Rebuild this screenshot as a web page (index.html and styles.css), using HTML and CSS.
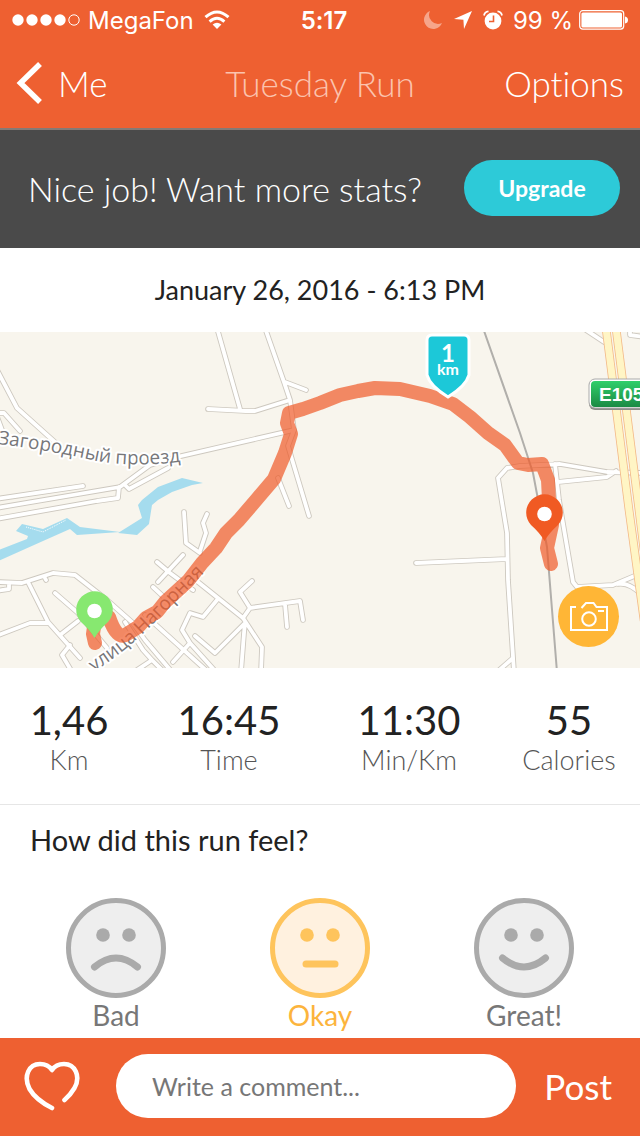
FILE: index.html
```html
<!DOCTYPE html>
<html lang="en">
<head>
    <meta charset="UTF-8">
    <meta name="viewport" content="width=device-width, initial-scale=1.0">
    <title>Tuesday Run</title>
    <link rel="stylesheet" href="styles.css">
</head>
<body>

    <header class="header">
        <div class="status-bar">
            <div class="status-left">
                <svg width="68" height="14" viewBox="0 0 68 14" fill="#fff">
                    <circle cx="6" cy="7" r="5.7"/>
                    <circle cx="20" cy="7" r="5.7"/>
                    <circle cx="34" cy="7" r="5.7"/>
                    <circle cx="48" cy="7" r="5.7"/>
                    <circle cx="62" cy="7" r="5.2" fill="none" stroke="#fff"/>
                </svg>
                <span>MegaFon</span>
                <svg width="26" height="20" viewBox="0 0 26 20" fill="none" stroke="#fff" stroke-width="3">
                    <path d="M1.5 7.2 Q13 -3.2 24.5 7.2"/>
                    <path d="M5.6 11.6 Q13 5 20.4 11.6"/>
                    <path d="M13 19 L8.6 14.6 Q13 10.8 17.4 14.6 Z" fill="#fff" stroke="none"/>
                </svg>
            </div>
            <div class="status-time">5:17</div>
            <div class="status-right">
                <svg width="20" height="20" viewBox="0 0 20 20">
                    <path d="M7 1 A9.3 9.3 0 1 0 19 13 A9 9 0 0 1 7 1 Z" fill="#f6a58a"/>
                </svg>
                <svg class="icon-location" width="20" height="20" viewBox="0 0 20 20">
                    <path d="M19 1 L11 19 L10.4 9.8 L1 9 Z" fill="#fff"/>
                </svg>
                <svg width="20" height="20" viewBox="0 0 20 20">
                    <circle cx="10" cy="11" r="8.4" fill="#fff"/>
                    <path d="M1 5.5 A5 5 0 0 1 5.5 1.3 M19 5.5 A5 5 0 0 0 14.5 1.3" fill="none" stroke="#fff" stroke-width="1.8"/>
                    <path d="M10.5 5.5 V11.5 H6" fill="none" stroke="#ee6031" stroke-width="1.6"/>
                </svg>
                <span class="battery-text">99 %</span>
                <svg width="49" height="20" viewBox="0 0 49 20" fill="#fff">
                    <rect x="0.7" y="0.7" width="44" height="18.4" rx="3" fill="none" stroke="#fff" stroke-width="1.2"/>
                    <rect x="2.4" y="2.4" width="40.6" height="15" rx="1.5"/>
                    <path d="M46 6.5 Q49 7 49 10 T46 13.5 Z"/>
                </svg>
            </div>
        </div>
        <nav class="nav-bar">
            <a href="#" class="nav-back">
                <svg width="28" height="42" viewBox="0 0 28 42" fill="none" stroke="#fff" stroke-width="5.5">
                    <path d="M24 2 L4.5 21 L24 40"/>
                </svg>
                Me
            </a>
            <h1 class="nav-title">Tuesday Run</h1>
            <a href="#" class="nav-options">Options</a>
        </nav>
    </header>

    <section class="upgrade">
        <p class="upgrade-text">Nice job! Want more stats?</p>
        <button type="button" class="upgrade-button">Upgrade</button>
    </section>

    <p class="run-date">January 26, 2016 - 6:13 PM</p>

    <section class="map">
        <svg class="map-canvas" viewBox="0 332 640 336" preserveAspectRatio="xMidYMid slice">
            <defs>
                <g id="roads">
                    <path d="M-4 368 L17 408 L47 435 L56 443 M-4 413 H4 L20 431 M-4 414 L2 430"/>
                    <path d="M217 328 L240 409 M265 328 L284 382 L290 400 L294 430 L288 446 L309 516 M285 382 L306 390 M208 409 L246 411 H255 L290 400"/>
                    <path d="M294 430 L177 457 L150 465 L120 487 L-4 508 M-4 499 L83 486 M125 485 L129 489 L168 468 M119 487 L118 498 L97 501 L-4 519 M278 478 L289 506"/>
                    <path d="M-4 582 L22 583 L53 573 L75 575 L107 600 L133 623 L145 640 L172 672 M-4 591 L9 589 V583 M44 576 L46 580"/>
                    <path d="M28 582 L48 622 L80 658 M-4 636 L30 623 H48 M55 593 L78 613 L107 648 M60 635 L78 621 M70 645 L62 655 L72 672"/>
                    <path d="M153 587 L167 600 M145 615 L187 653 L208 672 M157 562 L170 573 L193 590 M158 582 L183 555 M184 512 L186 543 L200 553 M207 514 L203 523 L206 533 L200 551"/>
                    <path d="M193 578 L218 598 L243 618 L262 647 L261 672 M217 600 L203 617 L190 613 L182 630 L190 643 L173 662 M190 643 L216 672 M195 636 L215 653 L245 623 L244 633 L241 672"/>
                    <path d="M243 618 L250 608 L240 592 L252 581 M250 608 L300 601 L303 620 M285 604 L287 627 M125 622 L143 650 L152 660 L134 672 M152 660 L164 672"/>
                    <path d="M416 563 L507 559 M513 658 L497 672 M514 672 L508 580 L507 533 L498 478 L507 468 L520 466 L560 464 L607 472 L644 473 M555 464 L559 500 L573 582 L577 587 L613 585 L644 572 M618 584 Q630 582 644 597 M558 482 L607 477 L616 471"/>
                    <path d="M583 328 L604 342 M630 328 V335 L644 337"/>
                </g>
                <path id="street-north" d="M-2 444 Q40 449 88 459 Q135 470 200 459"/>
                <path id="street-south" d="M94 672 Q130 648 154 623 L220 557"/>
                <linearGradient id="sign-green" x1="0" y1="0" x2="0" y2="1">
                    <stop offset="0" stop-color="#2fcf6b"/>
                    <stop offset="1" stop-color="#1b8a44"/>
                </linearGradient>
            </defs>
            <rect x="-2000" y="332" width="5000" height="336" fill="#f8f5ed"/>

            <!-- water -->
            <g fill="#a5dcee">
                <path d="M203 483 L182 478 L158 487 L142 500 L138 505 L142 518 L118 533 L137 535 L149 524 L152 505 L158 500 L172 492 L192 485 Z"/>
                <path d="M-4 551 L27 539 L28 536 L16 531 L22 524 L43 529 L67 518 L80 527 L120 532 L77 535 L70 529 L43 541 L-4 562 Z"/>
            </g>
            <path d="M26 527 L43 532 L66 520" fill="none" stroke="#fff" stroke-dasharray="1 1"/>

            <!-- roads -->
            <g fill="none" stroke-linecap="round" stroke-linejoin="round">
                <use href="#roads" stroke="#cdc8bf" stroke-width="5.6"/>
                <use href="#roads" stroke="#fff" stroke-width="3.8"/>
                <path d="M483 328 L520 433 L533 473 L547 547 L557 672" stroke="#b1afab" stroke-width="2"/>
                <path d="M606 328 L629 510 L644 620 M616 328 L639 510 L644 550" stroke="#f3b987" stroke-width="8.6"/>
                <path d="M606 328 L629 510 L644 620 M616 328 L639 510 L644 550" stroke="#fff5c5" stroke-width="7"/>
            </g>

            <g class="street-name">
                <text><textPath href="#street-north">Загородный проезд</textPath></text>
                <text><textPath href="#street-south">улица Нагорная</textPath></text>
            </g>

            <!-- track -->
            <path d="M95 643 L93 634 L95 620 L109 617 Q117 641 127 634 L138 627 L146 618 L157 612 L165 602 L188 581 L202 563 L216 548 L226 533 L239 520 L257 499 L274 479 L285 453 L291 434 L287 423 L289 413 L303 409 L320 403 L340 395 L358 391 L375 388 L400 389 L430 396 L453 404 L470 417 L488 433 L505 445 L518 463 L528 465 L542 464 L548 480 L549 500 L552 525 L547 548 L551 564" class="track"/>

            <!-- kilometre marker -->
            <path d="M432 335 H464 Q469 335 469 340 V375 Q466 386 448 397 Q430 386 427 375 V340 Q427 335 432 335 Z" fill="#1cc8d8" stroke="#fff" stroke-width="3"/>
            <text x="448" y="362" class="marker-number">1</text>
            <text x="448" y="375" class="marker-unit">km</text>

            <!-- road sign -->
            <rect x="589" y="380" width="70" height="30" rx="6" fill="#8c8c88"/>
            <rect x="589" y="379" width="70" height="29" rx="6" fill="#fff" stroke="#aaa"/>
            <rect x="591" y="381" width="70" height="26" rx="4" fill="url(#sign-green)"/>
            <text x="599" y="401" class="sign-text">E105</text>

            <!-- start and finish pins -->
            <path d="M94.5 638 Q90 630 81 622 A18.3 18.3 0 1 1 108 622 Q99 630 94.5 638 Z" fill="#87e870"/>
            <circle cx="94.5" cy="611" r="7.3" fill="#fff"/>
            <path d="M544.5 541 Q540 533 531 525 A18.3 18.3 0 1 1 558 525 Q549 533 544.5 541 Z" fill="#f05a23"/>
            <circle cx="544.5" cy="514" r="7.3" fill="#fff"/>
        </svg>
        <button type="button" class="camera-button" aria-label="Add photo">
            <svg width="40" height="30" viewBox="0 0 40 30" fill="none" stroke="#fff" stroke-width="2">
                <path d="M7 5 H2 V28 H38 V5 H27.5 L24.5 1 H17 L12.5 6"/>
                <path d="M29 9 H35"/>
                <circle cx="20" cy="17" r="6.8"/>
            </svg>
        </button>
    </section>

    <section class="stats">
        <div class="stat">
            <div class="stat-value">1,46</div>
            <div class="stat-label">Km</div>
        </div>
        <div class="stat">
            <div class="stat-value">16:45</div>
            <div class="stat-label">Time</div>
        </div>
        <div class="stat">
            <div class="stat-value">11:30</div>
            <div class="stat-label">Min/Km</div>
        </div>
        <div class="stat">
            <div class="stat-value">55</div>
            <div class="stat-label">Calories</div>
        </div>
    </section>

    <fieldset class="feeling">
        <legend class="feeling-title">How did this run feel?</legend>
        <div class="feeling-options">
            <label class="feeling-option" for="bad">
                <input type="radio" id="bad" name="feeling" value="bad">
                <svg class="face" width="100" height="100" viewBox="0 0 100 100">
                    <circle class="face-head" cx="50" cy="50" r="47.5"/>
                    <circle class="face-eye" cx="37" cy="37" r="6.8"/>
                    <circle class="face-eye" cx="63" cy="37" r="6.8"/>
                    <path class="face-mouth" d="M28.5 69 Q50 51 71.5 69"/>
                </svg>
                <span>Bad</span>
            </label>
            <label class="feeling-option" for="okay">
                <input type="radio" id="okay" name="feeling" value="okay" checked>
                <svg class="face" width="100" height="100" viewBox="0 0 100 100">
                    <circle class="face-head" cx="50" cy="50" r="47.5"/>
                    <circle class="face-eye" cx="37" cy="37" r="6.8"/>
                    <circle class="face-eye" cx="63" cy="37" r="6.8"/>
                    <path class="face-mouth" d="M36 66 H65"/>
                </svg>
                <span>Okay</span>
            </label>
            <label class="feeling-option" for="great">
                <input type="radio" id="great" name="feeling" value="great">
                <svg class="face" width="100" height="100" viewBox="0 0 100 100">
                    <circle class="face-head" cx="50" cy="50" r="47.5"/>
                    <circle class="face-eye" cx="37" cy="37" r="6.8"/>
                    <circle class="face-eye" cx="63" cy="37" r="6.8"/>
                    <path class="face-mouth" d="M28.5 60 Q50 78 71.5 60"/>
                </svg>
                <span>Great!</span>
            </label>
        </div>
    </fieldset>

    <form class="comment-bar">
        <button type="button" class="like-button" aria-label="Like">
            <svg width="56" height="50" viewBox="0 0 56 50" fill="none" stroke="#fff" stroke-width="4.6" stroke-linecap="round" stroke-linejoin="round">
                <path d="M28 47 Q12 39 5.5 28 C-1 15 5 3 16 3 Q24 3 28 9 Q32 3 40 3 C51 3 57 15 50.5 27 Q46 34.5 40.5 39"/>
            </svg>
        </button>
        <input type="text" class="comment-input" placeholder="Write a comment..." aria-label="Write a comment">
        <button type="submit" class="post-button">Post</button>
    </form>

</body>
</html>
```
FILE: styles.css
```css
* {
    box-sizing: border-box;
}
body {
    margin: 0;
    min-height: 100vh;
    display: flex;
    flex-direction: column;
    background-color: #fff;
    color: #222;
    font-family: Lato, "Open Sans", sans-serif;
    font-variant-ligatures: none;
}
button, input {
    font-family: inherit;
}
button {
    border: none;
    padding: 0;
    cursor: pointer;
}
svg {
    display: block;
}

/* Header */
.header {
    background-color: #ee6031;
    color: #fff;
    border-bottom: 2px solid #857a75;
}
.status-bar {
    display: grid;
    grid-template-columns: 1fr auto 1fr;
    align-items: center;
    height: 40px;
    padding: 0 12px;
    font-family: Inter, sans-serif;
    font-size: 24px;
}
.status-left, .status-right {
    display: flex;
    align-items: center;
    gap: 10px;
}
.status-left span {
    margin-left: -2px;
}
.status-time {
    font-weight: 600;
    padding-left: 8px;
}
.status-right {
    justify-content: flex-end;
    gap: 6px;
}
.icon-location {
    margin: 0 4px;
}
.battery-text {
    margin-left: 4px;
}
.nav-bar {
    display: grid;
    grid-template-columns: 1fr auto 1fr;
    align-items: center;
    height: 88px;
    padding: 0 16px 2px;
    font-size: 35px;
    font-weight: 300;
}
.nav-bar a {
    color: #fff;
    text-decoration: none;
}
.nav-back {
    display: flex;
    align-items: center;
    gap: 14px;
}
.nav-title {
    margin: 0;
    font-size: 35px;
    font-weight: 300;
    color: #fbc3ae;
}
.nav-options {
    text-align: right;
}

/* Upgrade banner */
.upgrade {
    display: flex;
    align-items: center;
    justify-content: space-between;
    height: 118px;
    padding: 0 20px 2px 28px;
    background-color: #4a4a4a;
    color: #fff;
}
.upgrade-text {
    margin: 0;
    font-size: 34px;
    font-weight: 300;
}
.upgrade-button {
    width: 156px;
    height: 56px;
    border-radius: 28px;
    background-color: #2dcad8;
    color: #fff;
    font-size: 23px;
    font-weight: 700;
}
.run-date {
    margin: 0;
    font-size: 27px;
    line-height: 84px;
    text-align: center;
}

/* Map */
.map {
    position: relative;
    height: 336px;
}
.map-canvas {
    width: 100%;
    height: 100%;
}
.street-name {
    font-family: "Open Sans", sans-serif;
    font-size: 19px;
    fill: #77777a;
    stroke: #fff;
    stroke-width: 4px;
    stroke-linejoin: round;
    paint-order: stroke;
}
.track {
    fill: none;
    stroke: #f05a28;
    stroke-opacity: 0.7;
    stroke-width: 14px;
    stroke-linecap: round;
    stroke-linejoin: round;
}
.marker-number, .marker-unit {
    fill: #fff;
    font-weight: 700;
    text-anchor: middle;
}
.marker-number {
    font-size: 24px;
}
.marker-unit {
    font-size: 16px;
}
.sign-text {
    fill: #fff;
    font-family: "Liberation Sans", sans-serif;
    font-size: 19px;
    font-weight: 700;
}
.camera-button {
    position: absolute;
    right: 21px;
    bottom: 21px;
    display: flex;
    align-items: center;
    justify-content: center;
    width: 61px;
    height: 61px;
    border-radius: 50%;
    background-color: #ffb636;
}

/* Stats */
.stats {
    display: grid;
    grid-template-columns: 138fr 182fr 178fr 142fr;
    padding: 26px 0 30px;
    border-bottom: 1px solid #e6e6e6;
    text-align: center;
}
.stat-value {
    font-size: 40px;
    line-height: 52px;
}
.stat-label {
    font-size: 27px;
    font-weight: 300;
    line-height: 28px;
    color: #555;
}

/* Feeling */
.feeling {
    flex: 1;
    margin: 0;
    padding: 0 14px;
    border: none;
}
.feeling-title {
    padding: 17px 16px 19px;
    font-size: 29px;
    line-height: 36px;
}
.feeling-options {
    display: grid;
    grid-template-columns: repeat(3, 1fr);
    padding-top: 21px;
}
.feeling-option {
    display: flex;
    flex-direction: column;
    align-items: center;
    color: #777;
    font-size: 28px;
    line-height: 34px;
    cursor: pointer;
}
.feeling-option input {
    appearance: none;
    width: 0;
    height: 0;
    margin: 0;
}
.face-head {
    fill: #eee;
    stroke: #aaa;
    stroke-width: 5px;
}
.face-eye {
    fill: #aaa;
}
.face-mouth {
    fill: none;
    stroke: #aaa;
    stroke-width: 7px;
    stroke-linecap: round;
}
input:checked ~ span {
    color: #fcb43c;
}
input:checked + .face .face-head {
    fill: #fff1df;
    stroke: #fec45c;
}
input:checked + .face .face-eye {
    fill: #fec45c;
}
input:checked + .face .face-mouth {
    stroke: #fec45c;
}

/* Comment bar */
.comment-bar {
    display: flex;
    align-items: center;
    height: 98px;
    padding: 0 28px 2px 24px;
    background-color: #ee6031;
}
.like-button, .post-button {
    background: none;
    color: #fff;
}
.comment-input {
    flex: 1;
    min-width: 0;
    height: 64px;
    margin: 0 28px 0 36px;
    padding: 0 36px;
    border: none;
    border-radius: 32px;
    background-color: #fff;
    font-size: 25px;
}
.comment-input::placeholder {
    color: #777;
}
.post-button {
    font-size: 35px;
}
```
